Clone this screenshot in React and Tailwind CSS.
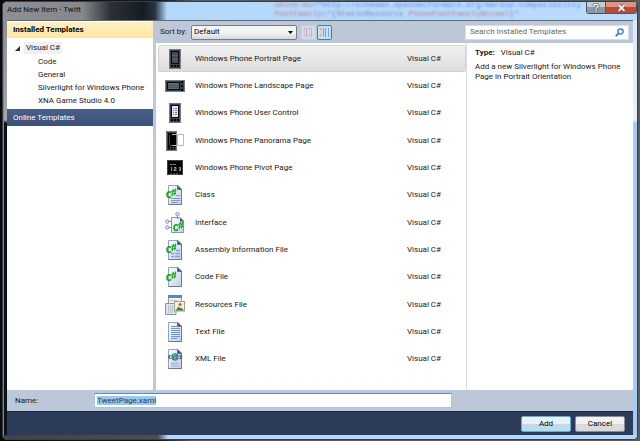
import { useEffect, useRef } from "react";

function PhoneIcon({ lines = false }) {
  return (
    <svg width="12" height="20" viewBox="0 0 12 20" aria-hidden="true">
      <rect x="0" y="0" width="12" height="20" fill="#77797d" />
      <rect x="1" y="1" width="10" height="18" fill="#3f4247" />
      <rect x="2" y="2" width="8" height="13" fill="#08090b" />
      {lines ? (
        <g>
          <rect x="3" y="3" width="6" height="11" fill="#dfe8f5" />
          <path d="M4 5.500h1m1 0h2M4 7.500h1m1 0h2M4 9.500h1m1 0h2M4 11.500h1m1 0h2" stroke="#5c80ae" />
        </g>
      ) : (
        <g>
          <rect x="3" y="3" width="6" height="11" fill="#434c59" />
          <path d="M3 6.500h6M3 10.500h6" stroke="#5a6573" />
        </g>
      )}
      <path d="M2 17h2m1 0h2m1 0h2" stroke="#050505" strokeWidth="2" />
    </svg>
  );
}

function LandscapeIcon() {
  return (
    <svg width="20" height="12" viewBox="0 0 20 12" aria-hidden="true">
      <rect width="20" height="12" fill="#77797d" />
      <rect x="1" y="1" width="18" height="10" fill="#3f4247" />
      <rect x="2" y="2" width="13" height="8" fill="#08090b" />
      <rect x="3" y="3" width="11" height="6" fill="#626a73" />
      <path d="M3 5.500h11M3 7.500h11" stroke="#4a525c" />
      <path d="M17 1v2m0 2v2m0 2v2" stroke="#050505" strokeWidth="2" />
    </svg>
  );
}

function PanoramaIcon() {
  return (
    <svg width="18" height="20" viewBox="0 0 18 20" aria-hidden="true">
      <rect width="11" height="20" fill="#77797d" />
      <rect x="1" y="1" width="9" height="18" fill="#3f4247" />
      <rect x="2" y="2" width="8" height="14" fill="#020202" />
      <path d="M3.500 3.500v11h6" fill="none" stroke="#444" />
      <path d="M2 17.500h2m1 0h2m1 0h1" stroke="#050505" strokeWidth="2" />
      <path d="M6 3.500h5M6 14.500h5" stroke="#b5b5b5" />
      <rect x="11.500" y="3.500" width="6" height="11" fill="#fff" stroke="#bcbcbc" />
    </svg>
  );
}

function PivotIcon() {
  return (
    <svg width="16" height="15" viewBox="0 0 16 15" aria-hidden="true">
      <rect width="16" height="15" fill="#3c3e42" />
      <rect x="1" y="1" width="14" height="13" fill="#050505" />
      <path d="M3 4.500h6" stroke="#777" />
      <path d="M4.500 7v4M7 7.500h2v1.500h-2v1.500h2.500M12 7.500h1.500v3H12M12 9h1.500" fill="none" stroke="#a8a8a8" strokeWidth="0.900" />
      <path d="M3 14h2m1 0h2m1 0h2" stroke="#777" />
    </svg>
  );
}

function Sheet() {
  return (
    <g>
      <path d="M2.500 .5h9.500l3.500 3.500v15.500h-13z" fill="url(#sheetFill)" stroke="#8fa5c6" />
      <path d="M15.500 4v15.500h-13" fill="none" stroke="#5f7aa5" />
      <path d="M11.500 .5v4h4z" fill="#44556f" stroke="#44556f" strokeWidth=".6" />
    </g>
  );
}

function CSharp({ x = 0, y = 0 }) {
  return (
    <g transform={`translate(${x} ${y})`} fill="none" stroke="#1ca51c">
      <path d="M5 4.500C2.500 3 .9 4.500 1 7c.1 2.300 2 3 4 1.500" strokeWidth="1.700" />
      <path d="M7.300 1 6.200 8M9.600 .6 8.500 7.500M5.300 3.500l5-.7M5.100 6l5-.7" strokeWidth="1.200" />
    </g>
  );
}

function FileIcon({ kind }) {
  return (
    <svg width="18" height="20" viewBox="0 0 18 20" aria-hidden="true">
      <Sheet />
      {kind === "class" && (
        <path d="M10 10.500h4M5 13.500h9M5 15.500h9M5 17.500h7" stroke="#8397b8" />
      )}
      {kind === "assembly" && (
        <path d="M10 10.500h4M5 13.500h3m1 0h5M5 16.500h3m1 0h5" stroke="#7fa0e0" strokeWidth="1.500" />
      )}
      {kind === "text" && (
        <path d="M5 4.500h6M5 6.500h9M5 8.500h9M5 10.500h9M5 12.500h9M5 14.500h9M5 16.500h6" stroke="#6f94d0" />
      )}
      {kind === "xml" && (
        <g>
          <circle cx="9" cy="8" r="3.700" fill="#3d78bd" />
          <path d="M6.500 6.500c1.200-2 2.500-2.500 3.500-2l-1 2.500 2 1-1.500 3-1.500-1-.5-2z" fill="#63b34c" />
          <path d="M4.500 6 2.500 8l2 2M13.500 6l2 2-2 2" fill="none" stroke="#4b586c" strokeWidth="1.300" />
          <rect x="5" y="13" width="8" height="5" fill="#bac7db" />
        </g>
      )}
      {(kind === "class" || kind === "assembly" || kind === "code") && <CSharp y={kind === "code" ? 4 : 3} />}
    </svg>
  );
}

function InterfaceIcon() {
  return (
    <svg width="20" height="21" viewBox="0 0 20 21" aria-hidden="true">
      <path d="M6.500 5.500h8.500l3.500 3.500v11.500h-12z" fill="url(#sheetFill)" stroke="#7f97bb" />
      <path d="M15 5.500v4h4z" fill="#44556f" />
      <path d="M12.500 4v3M4 9.500h3M4 15.500h3" stroke="#7b89a0" />
      <circle cx="12.500" cy="2.200" r="1.700" fill="#dfe8f5" stroke="#8492aa" />
      <circle cx="2.200" cy="9.500" r="1.700" fill="#dfe8f5" stroke="#8492aa" />
      <circle cx="2.200" cy="15.500" r="1.700" fill="#dfe8f5" stroke="#8492aa" />
      <CSharp x={8} y={9} />
    </svg>
  );
}

function ResourcesIcon() {
  return (
    <svg width="20" height="20" viewBox="0 0 20 20" aria-hidden="true">
      <rect x="3.500" y=".5" width="13" height="11" fill="#eef2f8" stroke="#8b9bb5" />
      <rect x="3" y="0" width="14" height="3" fill="#5b85cc" />
      <path d="M5 5.500h3m1 0h3" stroke="#e0c052" />
      <path d="M.5 8.500h9l1.500 2v9H.5z" fill="#dfe4ec" stroke="#8792a5" />
      <path d="M3.500 10v8M5.500 10v8M7.500 10v8" stroke="#b8c1cf" />
      <rect x="9.500" y="6.500" width="10" height="9.500" fill="#f6f2e2" stroke="#a1a18f" />
      <circle cx="15" cy="9.500" r="1.600" fill="#dc5a32" />
      <path d="M10.500 15.500l3-4 2 2 1-1 2.500 3z" fill="#43803a" />
    </svg>
  );
}

const templates = [
  { name: "Windows Phone Portrait Page", icon: <PhoneIcon /> },
  { name: "Windows Phone Landscape Page", icon: <LandscapeIcon /> },
  { name: "Windows Phone User Control", icon: <PhoneIcon lines /> },
  { name: "Windows Phone Panorama Page", icon: <PanoramaIcon /> },
  { name: "Windows Phone Pivot Page", icon: <PivotIcon /> },
  { name: "Class", icon: <FileIcon kind="class" /> },
  { name: "Interface", icon: <InterfaceIcon /> },
  { name: "Assembly Information File", icon: <FileIcon kind="assembly" /> },
  { name: "Code File", icon: <FileIcon kind="code" /> },
  { name: "Resources File", icon: <ResourcesIcon /> },
  { name: "Text File", icon: <FileIcon kind="text" /> },
  { name: "XML File", icon: <FileIcon kind="xml" /> },
];

const categories = ["Code", "General", "Silverlight for Windows Phone", "XNA Game Studio 4.0"];

function TitleBar() {
  return (
    <header className="relative flex h-[18px] items-start justify-between rounded-t-[4px] bg-[linear-gradient(to_right,#8d8f92_0,#85878a_80px,#2b3036_108px,#151b22_140px,#273440_152px,#b4d8fb_164px,#b9dcfd_100%)] pl-1">
      <div
        aria-hidden="true"
        className="absolute -top-[2px] left-[271px] font-['Liberation_Mono',monospace] text-[8px] leading-[9px] whitespace-pre opacity-60 blur-[1px]"
      >
        <div className="text-[#3b4fd0]">
          <span className="text-[#c23a4c]">xmlns:mc</span>="http://schemas.openxmlformats.org/markup-compatibility
        </div>
        <div className="text-[#3b4fd0]">
          <span className="text-[#c23a4c]">fontFamily</span>="&#123;<span className="text-[#6b4a78]">StaticResource</span>{" "}
          <span className="text-[#c23a4c]">PhoneFontFamilyNormal</span>&#125;"
        </div>
      </div>
      <h1 className="pt-[2px] leading-3 text-[#101010]">Add New Item - Twitt</h1>
      <div className="relative flex h-3 overflow-hidden rounded-b-[3px] border border-t-0 border-[#4a5560]">
        <button
          type="button"
          aria-label="Help"
          className="flex w-[19px] items-center justify-center border-r border-[#4a5560] bg-linear-to-b from-[#c3cdd6] from-50% to-[#8c98a4] to-50%"
        >
          <svg width="8" height="10" viewBox="0 0 8 10" aria-hidden="true" fill="none">
            <path d="M1.500 3C2 .5 6.500 .8 6.200 3.200 6 4.600 4 4.500 4 6.500M4 7.500V9.200" stroke="#4a535d" strokeWidth="2.600" />
            <path d="M1.500 3C2 .5 6.500 .8 6.200 3.200 6 4.600 4 4.500 4 6.500M4 7.500V9.200" stroke="#fff" strokeWidth="1.300" />
          </svg>
        </button>
        <button
          type="button"
          aria-label="Close"
          className="flex w-[30px] items-center justify-center bg-linear-to-b from-[#dc9482] from-50% to-[#c04832] to-50%"
        >
          <svg width="9" height="8" viewBox="0 0 9 8" aria-hidden="true">
            <path d="M1.500 1l6 6M7.500 1l-6 6" stroke="#6b2b25" strokeWidth="3" />
            <path d="M1.500 1l6 6M7.500 1l-6 6" stroke="#fff" strokeWidth="1.800" />
          </svg>
        </button>
      </div>
    </header>
  );
}

function Sidebar() {
  return (
    <nav className="w-[146px] shrink-0 bg-white">
      <h2 className="mt-px h-4 bg-linear-to-b from-[#fff0c4] to-[#ffe6a2] pl-[6px] leading-4 font-bold text-black">
        Installed Templates
      </h2>
      <div className="h-[71px] pt-1">
        <div className="flex h-3 items-center pl-2">
          <svg width="5" height="5" viewBox="0 0 5 5" aria-hidden="true">
            <path d="M5 0v5H0z" fill="#303030" />
          </svg>
          <a href="#visual-csharp" className="ml-1 bg-[#f0f0f0] px-[2px] leading-3">
            Visual C#
          </a>
        </div>
        <ul className="pt-px pl-[31px]">
          {categories.map((name) => (
            <li key={name} className="h-[13px] leading-[13px] whitespace-nowrap">
              <a href="#category">{name}</a>
            </li>
          ))}
        </ul>
      </div>
      <a
        href="#online"
        className="block h-[17px] bg-linear-to-b from-[#4a6089] to-[#3c5079] pl-[6px] leading-[17px] text-white"
      >
        Online Templates
      </a>
    </nav>
  );
}

function ViewButton({ label, active }) {
  return (
    <button
      type="button"
      aria-label={label}
      className={
        active
          ? "flex size-[15px] items-center justify-center rounded-[2px] border border-[#3d82a8] bg-[#c3e2f3]"
          : "flex size-[15px] items-center justify-center rounded-[2px] border border-[#c8d0dc] bg-[#d4dae4]"
      }
    >
      <svg width="11" height="11" viewBox="0 0 11 11" aria-hidden="true">
        {active ? (
          <g>
            <path d="M4.500 1v9M6.500 1v9M9.500 1v9" stroke="#8b9bdc" />
            <path d="M1.500 1v2m0 4v2" stroke="#f08e8e" strokeWidth="1.500" />
            <path d="M1.500 4v2" stroke="#e8c860" strokeWidth="1.500" />
          </g>
        ) : (
          <g>
            <path d="M3.500 1v9M8.500 1v9" stroke="#a9b5e2" />
            <path d="M1.500 1v2m0 4v2M6.500 1v2m0 4v2" stroke="#eea3a3" />
            <path d="M1.500 4v2M6.500 4v2" stroke="#e7cf7e" />
          </g>
        )}
      </svg>
    </button>
  );
}

function Toolbar() {
  return (
    <div className="flex h-[22px] items-center bg-[#bcc7d8] pr-1 pl-1">
      <label htmlFor="sort" className="w-[31px] whitespace-nowrap">
        Sort by:
      </label>
      <div className="relative">
        <select
          id="sort"
          className="block h-[15px] w-[106px] appearance-none rounded-[2px] border border-[#777c84] bg-linear-to-b from-[#f4f4f4] from-50% to-[#d8d8d8] pl-[2px] leading-3 text-black"
        >
          <option>Default</option>
        </select>
        <svg className="pointer-events-none absolute top-[6px] right-1" width="5" height="3" viewBox="0 0 5 3" aria-hidden="true">
          <path d="M0 0h5L2.500 3z" fill="#000" />
        </svg>
      </div>
      <div className="ml-1 flex gap-px">
        <ViewButton label="Small icons" />
        <ViewButton label="Medium icons" active />
      </div>
      <div className="ml-auto flex h-[15px] w-[164px] items-center border border-[#d5dfec] bg-white pr-1 pl-1">
        <input
          type="search"
          aria-label="Search Installed Templates"
          placeholder="Search Installed Templates"
          className="min-w-0 flex-1 leading-3 outline-none placeholder:text-[#666]"
        />
        <svg width="9" height="9" viewBox="0 0 9 9" aria-hidden="true" fill="none">
          <circle cx="5.500" cy="3.500" r="2.700" fill="#e8f1fb" stroke="#3172b8" strokeWidth="1.200" />
          <path d="M3.500 5.500.7 8.300" stroke="#2360a8" strokeWidth="1.600" />
        </svg>
      </div>
    </div>
  );
}

function TemplateList() {
  return (
    <ul className="mt-[2px] ml-[2px] grid h-[328px] min-w-0 flex-1 grid-rows-12">
      {templates.map(({ name, icon }, index) => (
        <li key={name} className="min-h-0">
          <button
            type="button"
            className={
              index === 0
                ? "flex size-full items-center rounded-[2px] border border-[#d3d3d3] bg-linear-to-b from-[#f0f0f0] to-[#dedede] text-left"
                : "flex size-full items-center border border-transparent text-left"
            }
          >
            <span className="flex w-9 shrink-0 justify-center pr-2 pl-1">{icon}</span>
            <span className="flex-1 whitespace-nowrap">{name}</span>
            <span className="w-[58px]">Visual C#</span>
          </button>
        </li>
      ))}
    </ul>
  );
}

function Details() {
  return (
    <aside className="w-[167px] shrink-0 border-l border-[#d5deeb] pt-1 pr-2 pl-2">
      <p className="leading-[11px]">
        <b className="mr-1">Type:</b> Visual C#
      </p>
      <p className="mt-1 leading-[10px]">
        Add a new Silverlight for Windows Phone Page in Portrait Orientation
      </p>
    </aside>
  );
}

export default function App() {
  const nameField = useRef(null);

  useEffect(() => {
    nameField.current.focus();
    nameField.current.select();
  }, []);

  return (
    <div className="flex min-h-screen flex-col bg-[linear-gradient(to_right,#0a0a0c_0,#16181b_25%,#55585c_30%,#5c5c5e_100%)] pt-px pr-[2px] pb-px pl-[2px] font-[Roboto,'Open_Sans',sans-serif] text-[8px] leading-3 text-[#1a1a1a]">
      <svg width="0" height="0" className="absolute" aria-hidden="true">
        <defs>
          <linearGradient id="sheetFill" x1="0" y1="0" x2="1" y2="1">
            <stop offset="0" stopColor="#fff" />
            <stop offset="1" stopColor="#bfd0ea" />
          </linearGradient>
        </defs>
      </svg>
      <main className="flex flex-1 flex-col rounded-[5px] border border-[#3a3f45] bg-[#b4d8fb]">
        <TitleBar />
        <div className="flex flex-1">
          <div className="w-1 border-l border-[#7b858c] bg-[linear-gradient(to_bottom,#8d8f92_0,#a5a7aa_100px,#0c1318_103px)]" />
          <div className="flex min-w-0 flex-1 flex-col border-t border-[#5f6a76]">
            <div className="flex flex-1 bg-[#bcc7d8]">
              <Sidebar />
              <div className="flex min-w-0 flex-1 flex-col pl-[3px]">
                <Toolbar />
                <div className="flex flex-1 bg-white">
                  <TemplateList />
                  <Details />
                </div>
              </div>
            </div>
            <div className="flex h-[21px] items-center bg-[#bcc7d8] pl-2">
              <label htmlFor="name" className="w-[79px]">
                Name:
              </label>
              <input
                id="name"
                ref={nameField}
                defaultValue="TweetPage.xaml"
                className="h-[15px] w-[358px] border border-[#a9c6e6] border-t-[#5b8cc4] bg-white pl-[2px] leading-3 outline-none selection:bg-[#99c9ef] selection:text-[#23405f]"
              />
            </div>
            <footer className="flex h-6 items-center justify-end gap-1 border-t border-[#1e2a42] bg-[#2b3b59] pr-2">
              <button
                type="button"
                className="h-4 w-[50px] rounded-[2px] border border-[#5fb0d4] bg-linear-to-b from-[#e6f2f8] from-50% to-[#bddbe9] to-50% leading-3 text-black"
              >
                Add
              </button>
              <button
                type="button"
                className="h-4 w-[50px] rounded-[2px] border border-[#8a8d92] bg-linear-to-b from-[#f2f2f2] from-50% to-[#dadada] to-50% leading-3 text-black"
              >
                Cancel
              </button>
            </footer>
          </div>
          <div className="w-1 bg-[linear-gradient(to_bottom,#dcebf8_0,#e4f0fa_100px,#a3cdf5_103px)]" />
        </div>
        <div className="h-1 rounded-b-[4px] bg-[linear-gradient(to_right,#3d4347_0,#4a4f53_155px,#b4d8fb_165px)]" />
      </main>
    </div>
  );
}
